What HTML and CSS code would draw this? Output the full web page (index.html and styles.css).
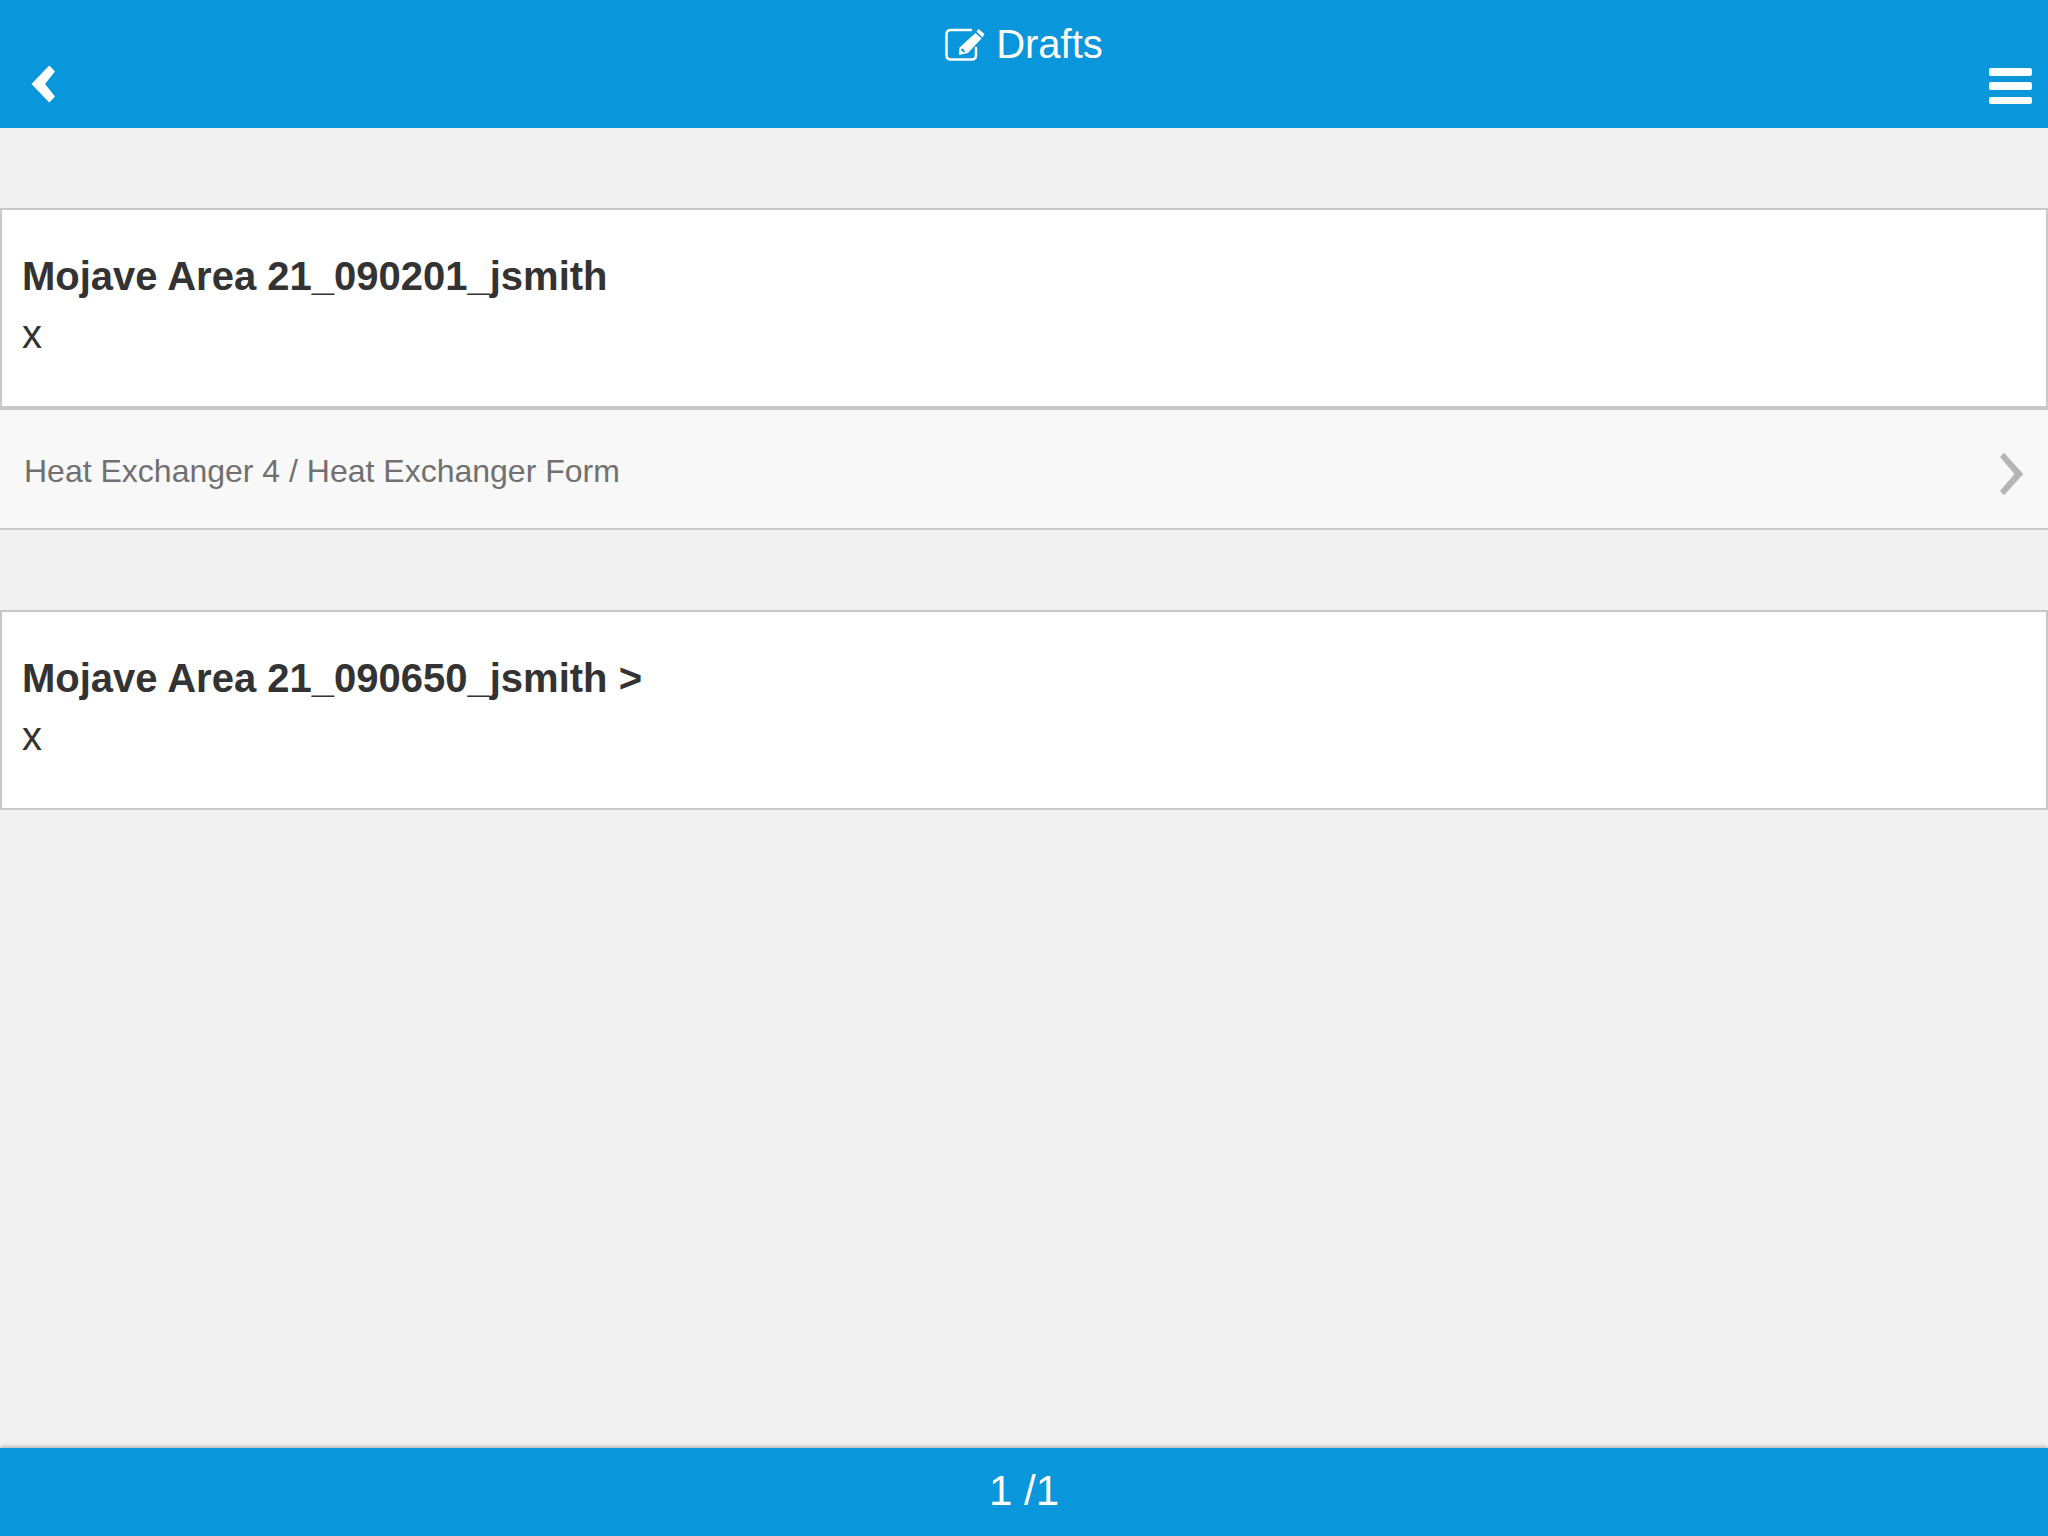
FILE: index.html
```html
<!DOCTYPE html>
<html lang="en">
<head>
    <meta charset="UTF-8">
    <meta name="viewport" content="width=device-width, initial-scale=1.0">
    <title>Drafts</title>
    <link rel="stylesheet" href="styles.css">
</head>
<body>
  <header class="header">
    <svg class="back-icon" width="28" height="40" viewBox="0 0 28 40">
      <path d="M1.5 20 L18.3 2.5 L23 7.5 L13 20 L23 32.5 L18.3 37.5 Z" fill="#fff" stroke="#fff" stroke-width="1.5" stroke-linejoin="round"/>
    </svg>
    <h1 class="header-title">
      <svg class="drafts-icon" width="40" height="33" viewBox="0 0 40 33">
        <path d="M26 2 H6 Q1.5 2 1.5 6.5 V27 Q1.5 31.5 6 31.5 H26.5 Q31 31.5 31 27 V20" fill="none" stroke="#fff" stroke-width="2.5" stroke-linecap="round"/>
        <path d="M33.5 1 L39.5 6 L37.5 9.5 L31.5 3.5 Z M30.5 5 L36.5 10.5 L23 25 L14 27 L14.5 19.5 Z" fill="#fff"/>
        <path d="M16.5 21 L19.5 24" stroke="#0a96da" stroke-width="2"/>
      </svg>
      <span>Drafts</span>
    </h1>
    <div class="menu-icon">
      <span></span>
      <span></span>
      <span></span>
    </div>
  </header>

  <main class="content">
    <section class="draft">
      <div class="draft-card">
        <h2>Mojave Area 21_090201_jsmith</h2>
        <p>x</p>
      </div>
      <a class="draft-link">
        <span>Heat Exchanger 4 / Heat Exchanger Form</span>
        <svg class="link-arrow" width="28" height="46" viewBox="0 0 28 46">
          <path d="M2 6 L6 1.7 L25.3 23 L6 44.3 L2 40 L16.5 23 Z" fill="#b5b5b5"/>
        </svg>
      </a>
    </section>

    <section class="draft">
      <div class="draft-card">
        <h2>Mojave Area 21_090650_jsmith &gt;</h2>
        <p>x</p>
      </div>
    </section>
  </main>

  <footer class="footer">1 /1</footer>
</body>
</html>
```

FILE: styles.css
```css
* {
  box-sizing: border-box;
}

body {
  display: flex;
  flex-direction: column;
  height: 1536px;
  margin: 0;
  background-color: #f0f0f0;
  color: #333;
  font-family: "Liberation Sans", Arial, sans-serif;
}

.header {
  display: grid;
  grid-template-columns: 1fr auto 1fr;
  align-items: start;
  flex: 0 0 128px;
  padding: 0 16px;
  background-color: #0a96da;
}

.back-icon {
  margin: 64px 0 0 15px;
}

.header-title {
  display: flex;
  align-items: center;
  gap: 11px;
  margin: 21px 0 0;
  color: #fff;
  font-size: 40px;
  font-weight: normal;
  line-height: 46px;
}

.menu-icon {
  display: flex;
  flex-direction: column;
  justify-self: end;
  gap: 6.8px;
  margin-top: 68px;
}

.menu-icon span {
  display: block;
  width: 43px;
  height: 7.5px;
  border-radius: 2px;
  background-color: #fff;
}

.content {
  flex: 1;
  padding-top: 80px;
}

.draft {
  margin-bottom: 80px;
}

.draft-card {
  height: 200px;
  padding: 43px 20px 0;
  border: 2px solid #c8c8c8;
  background-color: #fff;
}

.draft-card h2 {
  margin: 0;
  font-size: 40px;
  line-height: 46px;
}

.draft-card p {
  margin: 12px 0 0;
  font-size: 40px;
  line-height: 46px;
}

.draft-link {
  display: flex;
  justify-content: space-between;
  align-items: center;
  height: 122px;
  padding: 4px 22px 0 24px;
  border-top: 2px solid #c8c8c8;
  border-bottom: 2px solid #c8c8c8;
  background-color: #f8f8f8;
  color: #707070;
  font-size: 32px;
}

.link-arrow {
  margin-top: 6px;
}

.footer {
  flex: 0 0 88px;
  box-shadow: 0 -1px 4px rgba(0, 0, 0, 0.3);
  background-color: #0a96da;
  color: #fff;
  font-size: 42px;
  line-height: 86px;
  text-align: center;
}
```
